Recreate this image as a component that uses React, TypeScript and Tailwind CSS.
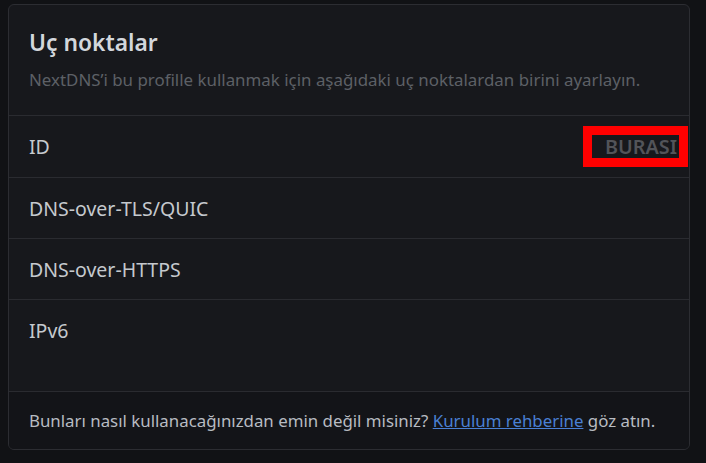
import React from "react";

const font = { fontFamily: '"Noto Sans", "Open Sans", sans-serif' };

function Row({ label, children, h }: { label: string; children?: React.ReactNode; h: string }) {
  return (
    <div className={`flex items-start justify-between border-t border-[#2a2b30] pl-[20px] pr-[1px] ${h}`}>
      <div className="h-[61px] flex items-center text-[19.5px] text-[#c5c9ce]">{label}</div>
      {children ? <div className="h-[61px] flex items-center">{children}</div> : null}
    </div>
  );
}

export default function App() {
  return (
    <div className="w-[706px] h-[463px] bg-[#111215] pt-[4px] pl-[8px]" style={font}>
      <div className="w-[682px] h-[446px] rounded-[6px] border border-[#2c2d32] bg-[#17181c] overflow-hidden flex flex-col">
        <div className="h-[110px] pl-[20px] pt-[23px]">
          <div className="text-[22.8px] font-semibold leading-[30px] text-[#d3d7dc]">Uç noktalar</div>
          <div className="mt-[11px] text-[16.9px] leading-[22px] text-[#5d6066] whitespace-nowrap">
            NextDNS’i bu profille kullanmak için aşağıdaki uç noktalardan birini ayarlayın.
          </div>
        </div>
        <Row label="ID" h="h-[62px]">
          <span className="border-[9px] border-[#ff0000] pl-[13px] pr-[2px] leading-[23px] text-[19.8px] font-semibold text-[#525459]">
            BURASI
          </span>
        </Row>
        <Row label="DNS-over-TLS/QUIC" h="h-[61px]" />
        <Row label="DNS-over-HTTPS" h="h-[61px]" />
        <Row label="IPv6" h="h-[92px]" />
        <div className="flex-1 border-t border-[#2a2b30] bg-[#131418] pl-[20px] flex items-center text-[16.85px] text-[#b8bcc2] whitespace-nowrap">
          <span>
            Bunları nasıl kullanacağınızdan emin değil misiniz?{" "}
            <a className="text-[#4a80d4] underline">Kurulum rehberine</a> göz atın.
          </span>
        </div>
      </div>
    </div>
  );
}
